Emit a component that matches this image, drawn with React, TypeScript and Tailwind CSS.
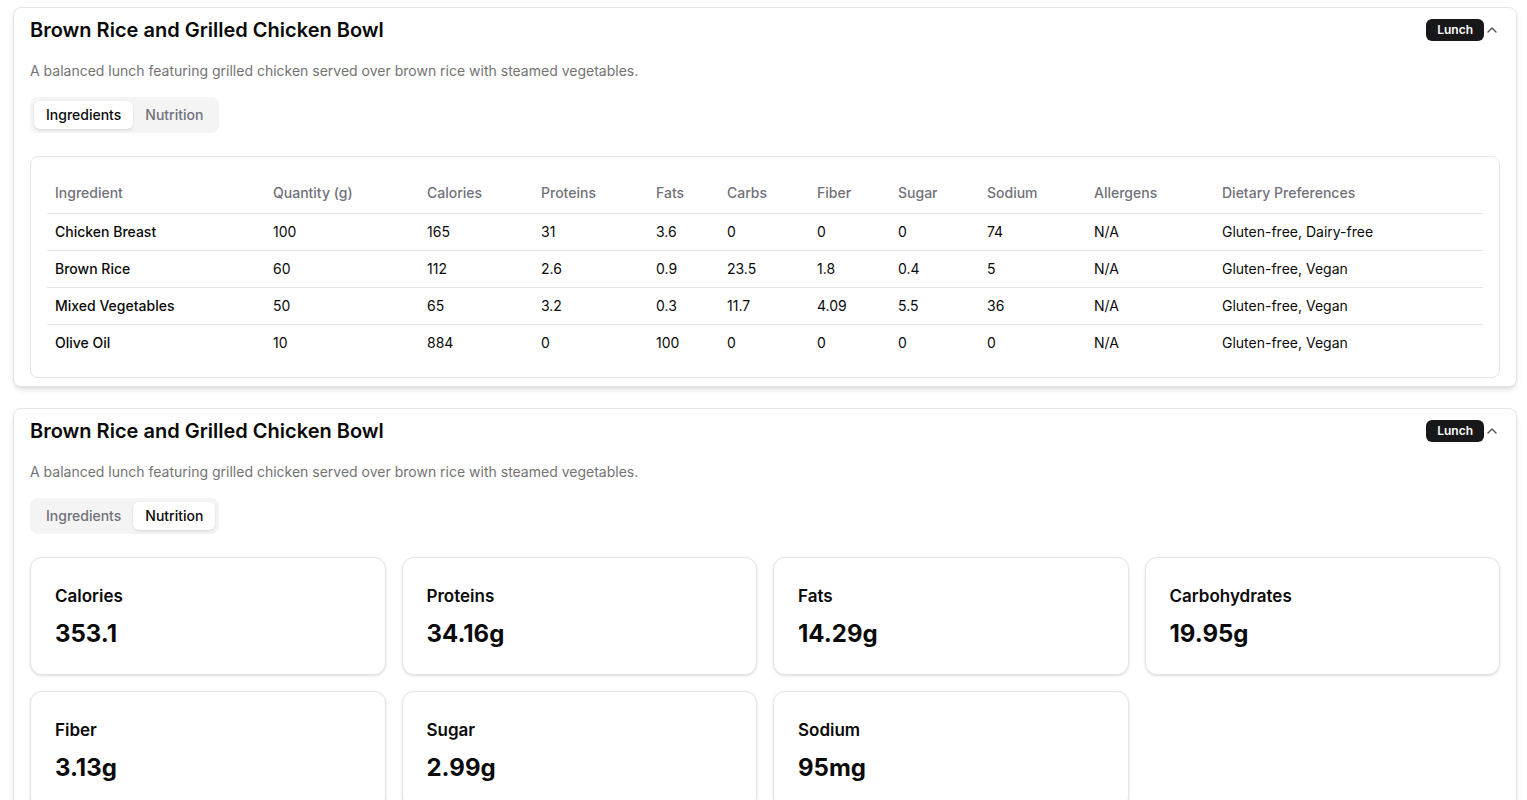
import React from "react";

const rows = [
  ["Chicken Breast", "100", "165", "31", "3.6", "0", "0", "0", "74", "N/A", "Gluten-free, Dairy-free"],
  ["Brown Rice", "60", "112", "2.6", "0.9", "23.5", "1.8", "0.4", "5", "N/A", "Gluten-free, Vegan"],
  ["Mixed Vegetables", "50", "65", "3.2", "0.3", "11.7", "4.09", "5.5", "36", "N/A", "Gluten-free, Vegan"],
  ["Olive Oil", "10", "884", "0", "100", "0", "0", "0", "0", "N/A", "Gluten-free, Vegan"],
];

const headers: [string, string][] = [
  ["Ingredient", "w-[218px]"],
  ["Quantity (g)", "w-[154px]"],
  ["Calories", "w-[114px]"],
  ["Proteins", "w-[115px]"],
  ["Fats", "w-[71px]"],
  ["Carbs", "w-[90px]"],
  ["Fiber", "w-[81px]"],
  ["Sugar", "w-[89px]"],
  ["Sodium", "w-[107px]"],
  ["Allergens", "w-[128px]"],
  ["Dietary Preferences", ""],
];

const nutrition = [
  ["Calories", "353.1"],
  ["Proteins", "34.16g"],
  ["Fats", "14.29g"],
  ["Carbohydrates", "19.95g"],
  ["Fiber", "3.13g"],
  ["Sugar", "2.99g"],
  ["Sodium", "95mg"],
];

function ChevronUp() {
  return (
    <svg width="16" height="16" viewBox="0 0 24 24" fill="none" stroke="#52525b" strokeWidth="2" strokeLinecap="round" strokeLinejoin="round">
      <path d="m18 15-6-6-6 6" />
    </svg>
  );
}

function Header({ active }: { active: "ing" | "nut" }) {
  return (
    <>
      <div className="flex items-center justify-between">
        <h2 className="text-xl leading-7 font-semibold text-[#0a0a0a]">Brown Rice and Grilled Chicken Bowl</h2>
        <div className="flex items-center">
          <span className="rounded-md bg-[#18181b] text-white text-xs font-semibold px-[11px] h-[22px] flex items-center">Lunch</span>
          <ChevronUp />
        </div>
      </div>
      <p className="mt-[17px] text-sm leading-5 text-[#737373]">A balanced lunch featuring grilled chicken served over brown rice with steamed vegetables.</p>
      <div className="mt-4 inline-flex h-9 items-center rounded-lg bg-[#f4f4f5] p-1">
        <div className={`h-7 px-3 flex items-center rounded-md text-sm font-medium ${active === "ing" ? "bg-white shadow-sm text-[#0a0a0a]" : "text-[#71717a]"}`}>Ingredients</div>
        <div className={`h-7 px-3 flex items-center rounded-md text-sm font-medium ${active === "nut" ? "bg-white shadow-sm text-[#0a0a0a]" : "text-[#71717a]"}`}>Nutrition</div>
      </div>
    </>
  );
}

export default function App() {
  return (
    <div className="min-h-screen bg-white pl-[13px] pr-[10px] pt-[7px] flex flex-col gap-[21px]" style={{ fontFamily: "Inter, 'Noto Sans', sans-serif" }}>
      <div className="rounded-lg border border-[#e5e5e5] bg-white shadow-md px-4 pt-2 pb-2">
        <Header active="ing" />
        <div className="mt-[23px] rounded-lg border border-[#e5e5e5] p-4">
          <table className="w-full table-fixed text-sm">
            <thead>
              <tr className="border-b border-[#e5e5e5]">
                {headers.map(([h, w]) => (
                  <th key={h} className={`${w} h-10 px-2 text-left font-medium text-[#71717a]`}>{h}</th>
                ))}
              </tr>
            </thead>
            <tbody>
              {rows.map((r, i) => (
                <tr key={i} className={i < rows.length - 1 ? "border-b border-[#e5e5e5]" : ""}>
                  {r.map((c, j) => (
                    <td key={j} className={`p-2 leading-5 text-[#0a0a0a] ${j === 0 ? "font-medium" : ""}`}>{c}</td>
                  ))}
                </tr>
              ))}
            </tbody>
          </table>
        </div>
      </div>

      <div className="rounded-lg border border-[#e5e5e5] bg-white shadow-md px-4 pt-2 pb-2">
        <Header active="nut" />
        <div className="mt-[23px] grid grid-cols-4 gap-4">
          {nutrition.map(([l, v]) => (
            <div key={l} className="rounded-xl border border-[#e5e5e5] bg-white shadow-sm p-6">
              <div className="text-[17px] leading-7 font-semibold text-[#0a0a0a]">{l}</div>
              <div className="mt-2 text-2xl leading-8 font-bold text-[#0a0a0a]">{v}</div>
            </div>
          ))}
        </div>
      </div>
    </div>
  );
}
